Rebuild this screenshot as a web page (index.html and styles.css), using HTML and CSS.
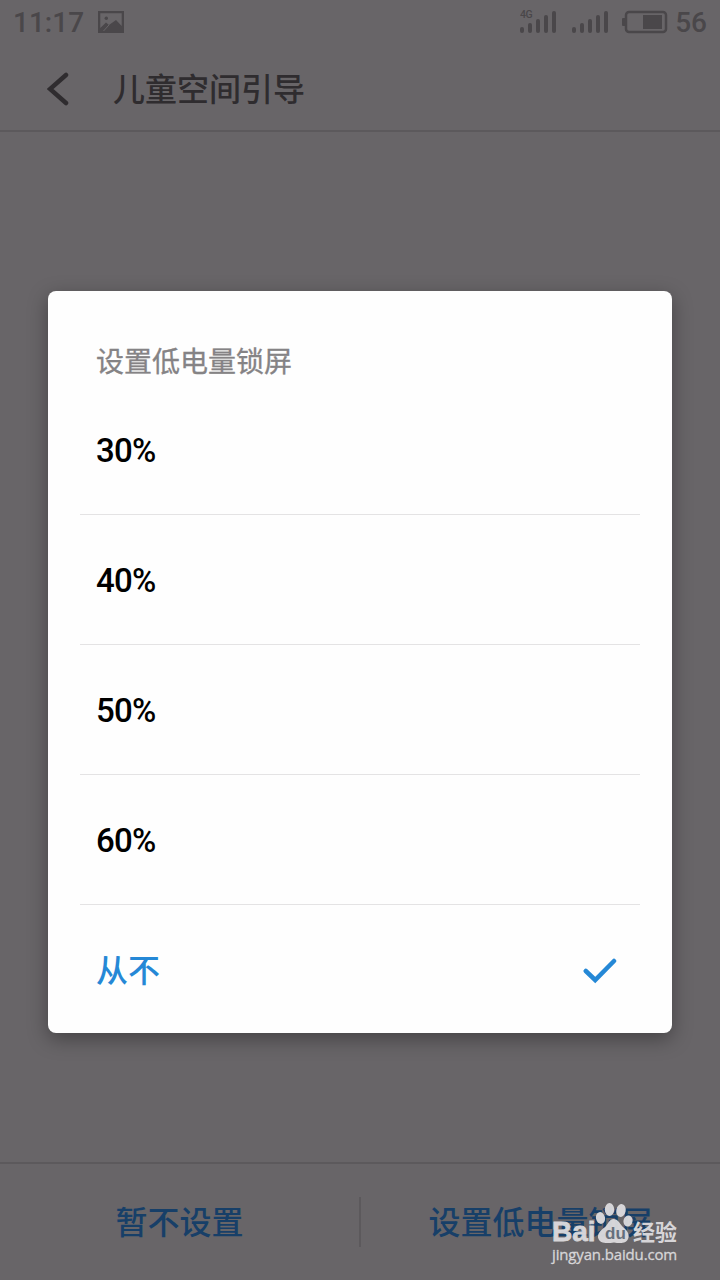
FILE: index.html
```html
<!DOCTYPE html>
<html lang="zh-CN">
<head>
<meta charset="utf-8">
<title>儿童空间引导</title>
<link rel="stylesheet" href="styles.css">
</head>
<body>
<div class="screen">
  <div class="status">
    <span class="clock">11:17</span>
    <svg class="picture" width="26" height="22" viewBox="0 0 26 22">
      <path fill-rule="evenodd" d="M0 0H26V22H0ZM2.3 2.3V17L8 11.5L11 14L18 9L23.7 15V2.3Z"/>
      <circle cx="8.3" cy="7.3" r="1.7"/>
      <path class="slit" d="M5.5 20L11 14"/>
    </svg>
    <svg class="signals" width="90" height="26" viewBox="0 0 90 26">
      <text x="0" y="9">4G</text>
      <path d="M2 20V22M10 16V22M18 12V22M26 8V22M34 4V22"/>
      <path d="M54 20V22M62 16V22M70 12V22M78 8V22M86 4V22"/>
    </svg>
    <svg class="battery" width="46" height="24" viewBox="0 0 46 24">
      <rect class="shell" x="4" y="2" width="40" height="20" rx="3"/>
      <rect x="21" y="5" width="19" height="14"/>
      <rect x="0" y="8" width="4" height="8" rx="1"/>
    </svg>
    <span class="level">56</span>
  </div>
  <header class="header">
    <svg class="back" width="22" height="34" viewBox="0 0 22 34"><path d="M19 3L3 17L19 31"/></svg>
    <h1>儿童空间引导</h1>
  </header>
  <main class="main">
    <section class="dialog">
      <h2>设置低电量锁屏</h2>
      <ul class="options">
        <li>30%</li>
        <li>40%</li>
        <li>50%</li>
        <li>60%</li>
        <li class="selected"><span>从不</span>
          <svg width="34" height="26" viewBox="0 0 34 26"><path d="M2.8 13L12.2 22L31 3"/></svg>
        </li>
      </ul>
    </section>
  </main>
  <footer class="footer">
    <span class="action">暂不设置</span>
    <span class="action">设置低电量锁屏</span>
  </footer>
  <div class="watermark">
    <div class="brand">
      <span class="bai">Bai</span>
      <svg width="38" height="42" viewBox="0 0 38 42">
        <ellipse cx="5.500" cy="16" rx="4.500" ry="6" transform="rotate(-12 5.500 16)"/>
        <ellipse cx="14.500" cy="7.500" rx="4.700" ry="6.500"/>
        <ellipse cx="26" cy="8.500" rx="4.700" ry="6.500" transform="rotate(12 26 8.500)"/>
        <ellipse cx="33" cy="19" rx="4.500" ry="5.500" transform="rotate(12 33 19)"/>
        <path d="M18.500 17C23 17 24.500 21 27 24C30 27 34.500 30 33.500 35.500C32 42 25 41.500 19 40.500C12 41.500 4.500 42 3 35.500C2.500 30 8 27 11 24C13.500 21 14.500 17 18.500 17Z"/>
        <text x="10" y="37">du</text>
      </svg>
      <span class="jingyan">经验</span>
    </div>
    <div class="address">jingyan.baidu.com</div>
  </div>
</div>
</body>
</html>
```
FILE: styles.css
```css
* { box-sizing: border-box; margin: 0; padding: 0; }
body { background: #686568; font-family: Roboto, "Noto Sans CJK SC", sans-serif; }
.screen {
  position: relative;
  display: flex;
  flex-direction: column;
  width: 720px;
  height: 1280px;
  overflow: hidden;
}
.status {
  display: flex;
  align-items: center;
  height: 44px;
  padding: 0 13px;
  color: #4a474a;
  fill: #4a474a;
  font-size: 28px;
  font-weight: 500;
}
.clock { width: 85px; }
.slit { stroke: #686568; stroke-width: 1; }
.signals { margin-left: auto; margin-right: 12px; }
.signals path { fill: none; stroke: #4a474a; stroke-width: 4; stroke-linecap: round; }
.signals text { font-size: 10.500px; letter-spacing: -0.5px; }
.battery { margin-right: 7px; }
.shell { fill: none; stroke: #4a474a; stroke-width: 2.5; }
.header {
  display: flex;
  align-items: center;
  gap: 44px;
  height: 88px;
  padding: 4px 0 0 47px;
  border-bottom: 2px solid #5c595c;
  color: #2f2c2f;
}
.header h1 { font-size: 32px; font-weight: 500; line-height: 48px; padding-top: 1px; }
.back { fill: none; stroke: #2f2c2f; stroke-width: 4.5; stroke-linecap: round; }
.main { flex: 1; padding: 159px 48px 0; }
.dialog {
  height: 742px;
  padding: 51px 32px 0;
  border-radius: 8px;
  background: #fefefe;
  box-shadow: 0 6px 20px rgba(0, 0, 0, 0.35);
}
.dialog h2 {
  padding-left: 16px;
  color: #858385;
  font-size: 28px;
  font-weight: 400;
  line-height: 42px;
  -webkit-text-stroke: 0.3px #858385;
}
.options { margin-top: 1px; list-style: none; }
.options li {
  display: flex;
  align-items: center;
  justify-content: space-between;
  height: 130px;
  padding: 2px 23px 0 16px;
  border-bottom: 1px solid #e4e3e4;
  color: #000;
  font-size: 33px;
  font-weight: 500;
  letter-spacing: -0.8px;
}
.options .selected { padding-right: 23px; border-bottom: 0; color: #2588d6; font-size: 32px; letter-spacing: 0; }
.selected span { padding-bottom: 7px; }
.selected svg { fill: none; stroke: #2588d6; stroke-width: 4.5; stroke-linecap: round; }
.footer {
  display: flex;
  align-items: center;
  height: 118px;
  border-top: 2px solid #5c595c;
  color: #173f68;
  font-size: 32px;
  font-weight: 500;
}
.action { flex: 1; text-align: center; line-height: 48px; padding-top: 2px; }
.action + .action { border-left: 2px solid #5c595c; }
.watermark {
  position: absolute;
  left: 552px;
  top: 1202px;
  width: 130px;
  color: #dedddf;
  opacity: 0.94;
}
.brand { display: flex; align-items: flex-end; height: 42px; }
.bai { width: 43px; font: 700 28px/24px "Liberation Sans", sans-serif; -webkit-text-stroke: 0.8px #dedddf; }
.brand svg { flex: none; fill: #dedddf; }
.brand text { fill: #68717e; font: 700 17px "Liberation Sans", sans-serif; }
.jingyan { font-size: 22px; font-weight: 700; line-height: 25px; white-space: nowrap; margin-bottom: -1px; }
.address { font: 15px/20px "Open Sans", "Noto Sans", sans-serif; letter-spacing: -0.15px; -webkit-text-stroke: 0.3px #dedddf; white-space: nowrap; }
```
